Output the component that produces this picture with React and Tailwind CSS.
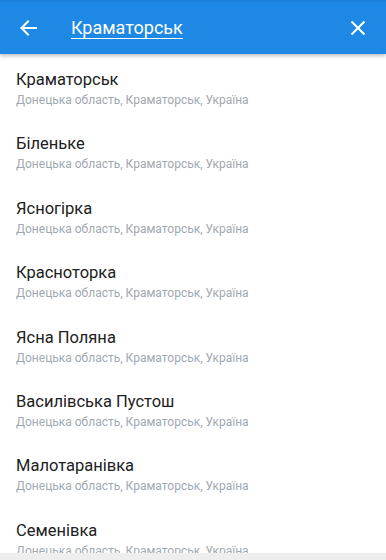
import React from 'react';

const places = [
  'Краматорськ',
  'Біленьке',
  'Ясногірка',
  'Красноторка',
  'Ясна Поляна',
  'Василівська Пустош',
  'Малотаранівка',
  'Семенівка',
];

const ArrowLeft = () => (
  <svg width="18" height="18" viewBox="0 0 18 18" fill="none" stroke="white" strokeWidth="2" strokeLinecap="square">
    <path d="M17 9H2.5M9 2.5L2.5 9L9 15.5" />
  </svg>
);

const CloseIcon = () => (
  <svg width="16" height="16" viewBox="0 0 16 16" fill="none" stroke="white" strokeWidth="2">
    <path d="M1.5 1.5L14.5 14.5M14.5 1.5L1.5 14.5" />
  </svg>
);

export default function App() {
  return (
    <div className="relative w-[386px] h-[560px] overflow-hidden bg-white font-['Roboto',sans-serif]">
      <div className="relative z-10 h-[54px] bg-[#1e88e5] border-t-2 border-[#1a7fd8] flex items-center shadow-[0_2px_4px_rgba(0,0,0,0.25)]">
        <div className="w-[71px] pl-[19px] flex items-center">
          <ArrowLeft />
        </div>
        <div className="flex-1 text-white text-[18px] underline underline-offset-[4px] decoration-[1px] leading-none">
          Краматорськ
        </div>
        <div className="pr-[20px] flex items-center">
          <CloseIcon />
        </div>
      </div>
      <div className="flex flex-col">
        {places.map((p) => (
          <div key={p} className="h-[64.4px] px-4 pt-[15px]">
            <div className="text-[16.5px] leading-[22px] text-[#212121]">{p}</div>
            <div className="text-[12px] leading-[18px] text-[#a0a9b2]">Донецька область, Краматорськ, Україна</div>
          </div>
        ))}
      </div>
      <div className="absolute bottom-0 left-0 right-0 h-[7px] bg-[#eeeeee]" />
    </div>
  );
}
